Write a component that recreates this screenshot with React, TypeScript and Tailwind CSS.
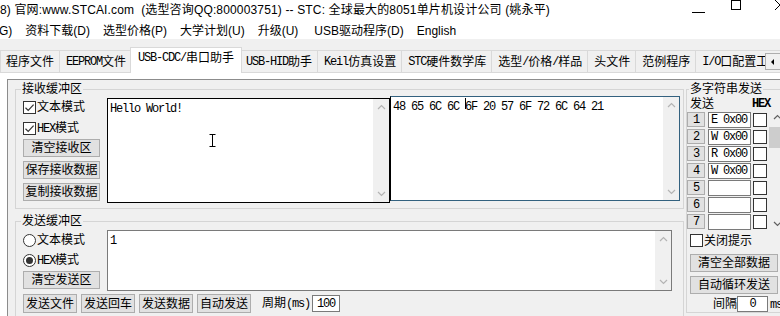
import React from 'react';

const ASCII = /([\x20-\x7e]+)/;

// SimSun-like run: CJK at 12px, ASCII squeezed to 6px per char
function Ss({ s }: { s: string }) {
  return (
    <>
      {s
        .split(ASCII)
        .filter(Boolean)
        .map((p, i) =>
          ASCII.test(p) ? (
            <span key={i} className="font-['Liberation_Mono',monospace] tracking-[-1.2px] whitespace-pre">
              {p}
            </span>
          ) : (
            <span key={i}>{p}</span>
          )
        )}
    </>
  );
}

function Check({ on, size = 'sm' }: { on?: boolean; size?: 'sm' | 'md' }) {
  return (
    <span
      className={`${size === 'md' ? 'w-[14px] h-[14px]' : 'w-[13px] h-[13px]'} border border-[#333] bg-white flex items-center justify-center shrink-0`}
    >
      {on && (
        <svg width="11" height="11" viewBox="0 0 11 11">
          <path d="M1.5 5.8 L4.2 8.4 L9.6 2.6" fill="none" stroke="#333" strokeWidth="1.2" />
        </svg>
      )}
    </span>
  );
}

function Radio({ on }: { on?: boolean }) {
  return (
    <span className="w-[13px] h-[13px] rounded-full border border-[#333] bg-white flex items-center justify-center shrink-0">
      {on && <span className="w-[7px] h-[7px] rounded-full bg-[#333]" />}
    </span>
  );
}

function Btn({ children, className = '' }: { children: React.ReactNode; className?: string }) {
  return (
    <div className={`bg-[#e1e1e1] border border-[#adadad] flex items-center justify-center leading-none whitespace-nowrap ${className}`}>
      {children}
    </div>
  );
}

function Chev({ up, color = '#b4b4b4' }: { up?: boolean; color?: string }) {
  return (
    <svg width="9" height="6" viewBox="0 0 9 6">
      <path d={up ? 'M1 5 L4.5 1.5 L8 5' : 'M1 1 L4.5 4.5 L8 1'} fill="none" stroke={color} strokeWidth="1.2" />
    </svg>
  );
}

function ScrollStrip() {
  return (
    <div className="w-[16px] self-stretch bg-[#f0f0f0] flex flex-col items-center justify-between py-[5px]">
      <Chev up />
      <Chev />
    </div>
  );
}

const tabs = [
  '程序文件',
  'EEPROM文件',
  'USB-CDC/串口助手',
  'USB-HID助手',
  'Keil仿真设置',
  'STC硬件数学库',
  '选型/价格/样品',
  '头文件',
  '范例程序',
  'I/O口配置工具',
];

const menu = ['G)', '资料下载(D)', '选型价格(P)', '大学计划(U)', '升级(U)', 'USB驱动程序(D)', 'English'];

const multi = ['E 0x00', 'W 0x00', 'R 0x00', 'W 0x00', '', '', ''];

export default function App() {
  return (
    <div className="w-[780px] h-[316px] overflow-hidden bg-white text-black text-[12px] font-['Liberation_Sans','Noto_Sans_CJK_SC',sans-serif] flex flex-col">
      {/* title bar */}
      <div className="h-[20px] flex items-start shrink-0">
        <span className="whitespace-nowrap leading-[14px] mt-[3px] tracking-[0.15px]">
          8) 官网:www.STCAI.com&nbsp; (选型咨询QQ:800003751) -- STC: 全球最大的8051单片机设计公司 (姚永平)
        </span>
        <div className="ml-auto mr-[-5px] flex items-start h-full shrink-0">
          <div className="w-[13px] h-px bg-black mt-[12px]" />
          <div className="w-[10px] h-[10px] border border-black ml-[26px]" />
          <svg className="ml-[34px]" width="10" height="10" viewBox="0 0 10 10">
            <path d="M0 0 L10 10 M10 0 L0 10" stroke="black" strokeWidth="1" />
          </svg>
        </div>
      </div>

      {/* menu */}
      <div className="h-[19px] flex items-start gap-[13px] whitespace-nowrap shrink-0 -ml-[1px]">
        {menu.map((m, i) => (
          <span key={m} className={`leading-[14px] mt-[4px] ${i === 5 ? 'ml-[3px]' : ''}`}>
            {m}
          </span>
        ))}
      </div>

      {/* tab strip */}
      <div className="h-[33px] bg-[#f0f0f0] flex items-end shrink-0 relative whitespace-nowrap">
        {tabs.map((t, i) =>
          i === 2 ? (
            <div
              key={t}
              className="h-[26px] bg-white border-x border-t border-[#d9d9d9] -mx-[2px] px-[7px] pb-[6px] mb-[-1px] relative z-10 flex items-center leading-[14px] shrink-0"
            >
              <Ss s={t} />
            </div>
          ) : (
            <div
              key={t}
              className={`h-[22px] pr-[5px] border-t border-r border-[#d9d9d9] flex items-center leading-[14px] shrink-0 ${i === 0 ? 'border-l pl-[5px]' : 'pl-[6px]'}`}
            >
              <Ss s={t} />
            </div>
          )
        )}
        <div className="absolute right-[-3px] top-[14px] w-[18px] h-[17px] bg-[#f0f0f0] border border-[#adadad] z-20 flex items-center pl-[5px]">
          <span className="w-0 h-0 border-y-[3px] border-y-transparent border-r-[3px] border-r-black" />
        </div>
      </div>

      {/* tab page */}
      <div className="flex-1 bg-white border-t border-[#d9d9d9] pl-[7px] pt-[6px] flex min-h-0">
        <div className="flex-1 bg-[#f0f0f0] border-t border-l border-[#8c8c8c] flex items-start pl-[7px] pt-[2px] min-w-0">
          {/* left column */}
          <div className="w-[669px] flex flex-col shrink-0">
            {/* receive buffer */}
            <fieldset className="border border-[#d5d5d5] p-0 m-0 min-w-0">
              <legend className="ml-[5px] px-[1px] leading-[14px]">接收缓冲区</legend>
              <div className="flex items-start pl-[7px] pb-[5px]">
                <div className="w-[77px] flex flex-col shrink-0 mt-[3px]">
                  <div className="h-[16px] flex items-center gap-[1px] leading-none">
                    <Check on />
                    <span>文本模式</span>
                  </div>
                  <div className="h-[16px] flex items-center gap-[1px] leading-none mt-[5px]">
                    <Check on />
                    <span>
                      <Ss s="HEX模式" />
                    </span>
                  </div>
                  <Btn className="h-[18px] mt-[3px]">清空接收区</Btn>
                  <Btn className="h-[18px] mt-[4px]">保存接收数据</Btn>
                  <Btn className="h-[18px] mt-[4px]">复制接收数据</Btn>
                </div>

                <div className="w-[283px] h-[105px] ml-[7px] mt-[2px] bg-white border border-black flex shrink-0">
                  <div className="flex-1 pl-[2px] pt-[3px] leading-[12px] relative">
                    <Ss s="Hello World!" />
                    <svg className="absolute left-[101px] top-[35px]" width="7" height="13" viewBox="0 0 7 13">
                      <path d="M0.5 0.5 H6.5 M3.5 0.5 V12.5 M0.5 12.5 H6.5" stroke="black" strokeWidth="1" fill="none" />
                    </svg>
                  </div>
                  <ScrollStrip />
                </div>

                <div className="w-[290px] h-[105px] bg-white border border-[#33617f] border-l-black flex shrink-0">
                  <div className="flex-1 pl-[2px] pt-[3px] leading-[12px] whitespace-pre">
                    <Ss s="48 65 6C 6C " />
                    <span className="relative">
                      <Ss s="6F" />
                      <span className="absolute left-0 top-[-1px] w-px h-[11px] bg-black" />
                    </span>
                    <Ss s=" 20 57 6F 72 6C 64 21" />
                  </div>
                  <ScrollStrip />
                </div>
              </div>
            </fieldset>

            {/* send buffer */}
            <fieldset className="border border-[#d5d5d5] p-0 m-0 mt-[5px] min-w-0">
              <legend className="ml-[5px] px-[1px] leading-[14px]">发送缓冲区</legend>
              <div className="pl-[7px] pb-[10px]">
                <div className="flex items-start">
                  <div className="w-[77px] flex flex-col shrink-0 mt-[4px]">
                    <div className="h-[16px] flex items-center gap-[1px] leading-none">
                      <Radio />
                      <span>文本模式</span>
                    </div>
                    <div className="h-[16px] flex items-center gap-[1px] leading-none mt-[4px]">
                      <Radio on />
                      <span>
                        <Ss s="HEX模式" />
                      </span>
                    </div>
                    <Btn className="h-[18px] mt-[3px]">清空发送区</Btn>
                  </div>
                  <div className="w-[565px] h-[61px] ml-[7px] mt-[2px] bg-white border border-[#7a7a7a] flex shrink-0">
                    <div className="flex-1 pl-[2px] pt-[3px] leading-[12px]">
                      <Ss s="1" />
                    </div>
                    <ScrollStrip />
                  </div>
                </div>
                <div className="flex items-center mt-[3px] gap-[4px]">
                  <Btn className="w-[54px] h-[19px]">发送文件</Btn>
                  <Btn className="w-[54px] h-[19px]">发送回车</Btn>
                  <Btn className="w-[54px] h-[19px]">发送数据</Btn>
                  <Btn className="w-[54px] h-[19px]">自动发送</Btn>
                  <span className="ml-[7px] leading-none whitespace-nowrap">
                    <Ss s="周期(ms)" />
                  </span>
                  <div className="w-[28px] h-[17px] -ml-[2px] bg-white border border-[#7a7a7a] flex items-center justify-center leading-none">
                    <Ss s="100" />
                  </div>
                </div>
              </div>
            </fieldset>
          </div>

          {/* multi-string send */}
          <fieldset className="border border-[#d5d5d5] p-0 m-0 ml-[2px] w-[110px] shrink-0 min-w-0">
            <legend className="ml-[2px] px-[1px] leading-[14px]">多字符串发送</legend>
            <div className="flex flex-col">
              <div className="h-[15px] flex items-center leading-none">
                <span className="ml-[3px]">发送</span>
                <span className="ml-[38px] font-bold">
                  <Ss s="HEX" />
                </span>
              </div>
              <div className="flex">
                <div className="flex flex-col">
                  {multi.map((m, i) => (
                    <div key={i} className="h-[17px] flex items-center">
                      <Btn className="w-[18px] h-[15px]">
                        <Ss s={String(i + 1)} />
                      </Btn>
                      <div className="w-[43px] h-[16px] ml-[3px] bg-white border border-[#7a7a7a] flex items-center pl-[2px] leading-none whitespace-pre overflow-hidden">
                        <Ss s={m} />
                      </div>
                      <span className="ml-[2px]">
                        <Check size="md" />
                      </span>
                    </div>
                  ))}
                </div>
                <div className="ml-[1px] w-[17px] h-[119px] bg-[#f0f0f0] flex flex-col items-center pl-[1px]">
                  <div className="h-[12px] flex items-center">
                    <Chev up color="#606060" />
                  </div>
                  <div className="w-full h-[21px] bg-[#cdcdcd] mt-[4px]" />
                  <div className="mt-auto h-[12px] flex items-center">
                    <Chev color="#606060" />
                  </div>
                </div>
              </div>
              <div className="h-[15px] mt-[3px] ml-[3px] flex items-center gap-[1px] leading-none">
                <Check />
                <span>关闭提示</span>
              </div>
              <Btn className="w-[88px] h-[18px] ml-[3px] mt-[6px]">清空全部数据</Btn>
              <Btn className="w-[88px] h-[18px] ml-[3px] mt-[4px]">自动循环发送</Btn>
              <div className="h-[16px] mt-[2px] flex items-center leading-none whitespace-nowrap">
                <span className="ml-[26px]">间隔</span>
                <div className="w-[31px] h-[16px] bg-white border border-[#7a7a7a] flex items-center justify-center">
                  <Ss s="0" />
                </div>
                <span className="ml-[2px]">
                  <Ss s="ms" />
                </span>
              </div>
            </div>
          </fieldset>
        </div>
      </div>
    </div>
  );
}
